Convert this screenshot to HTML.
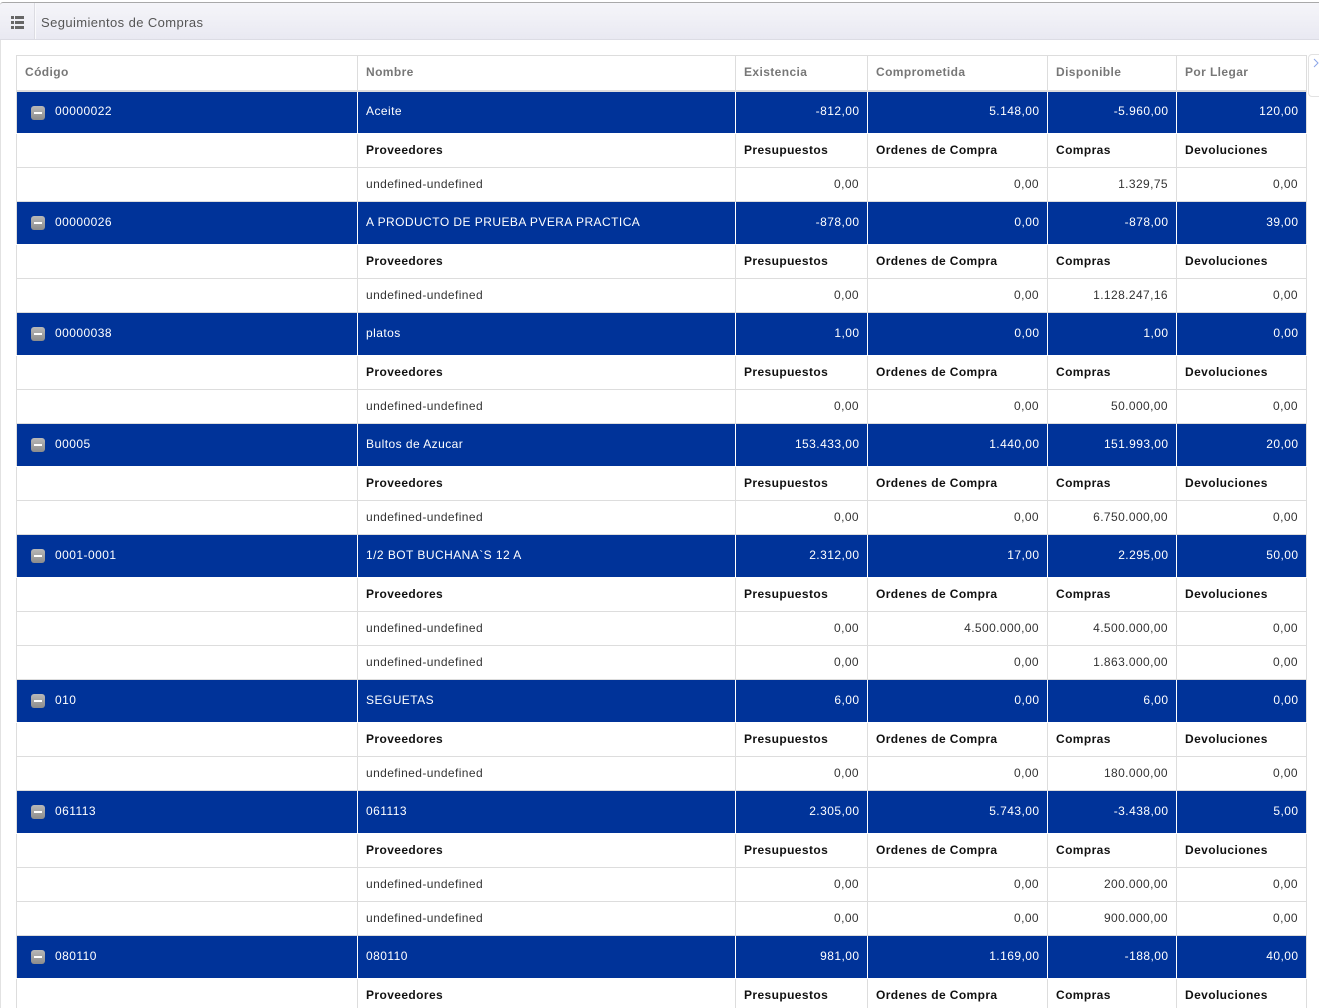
<!DOCTYPE html>
<html><head><meta charset="utf-8">
<style>
html,body{margin:0;padding:0;width:1319px;height:1008px;overflow:hidden;background:#fff;font-family:"Liberation Sans",sans-serif;}
#wrap{position:absolute;left:0;top:0;width:1319px;height:1008px;overflow:hidden;}
#top{position:absolute;left:0;top:2px;width:1319px;background:linear-gradient(#f5f5f9,#e9e9f2);border-top:1px solid #a9a9a9;border-bottom:1px solid #dcdce4;height:36px;border-top-left-radius:3px;}
#sep{position:absolute;left:34px;top:3px;width:1px;height:36px;background:#dcdce2;border-right:1px solid #fafafc;}
#ttl{position:absolute;left:41px;top:14px;font-size:13px;line-height:17px;letter-spacing:.4px;color:#555;white-space:nowrap;}
#ic{position:absolute;left:11px;top:16px;}
#lb{position:absolute;left:0;top:40px;width:1px;height:968px;background:#e2e2e2;}
#tab{position:absolute;left:1308px;top:54px;width:14px;height:43px;border:1px solid #e2e2e2;border-radius:4px 0 0 4px;box-sizing:border-box;background:#fff;}
table{position:absolute;left:16px;top:55px;border-collapse:collapse;table-layout:fixed;width:1290px;font-size:12px;letter-spacing:.4px;color:#333;}
td,th{border:1px solid #ddd;padding:0 8px;white-space:nowrap;overflow:hidden;box-sizing:border-box;font-weight:normal;text-align:left;}
th{height:35px;color:#777;font-weight:bold;border-bottom:2px solid #ddd;padding-bottom:2px;}
tr.b td{height:43px;background:#003399;color:#fff;border-color:#fff;letter-spacing:.45px;padding-bottom:3px;}
tr.b td.r{padding-right:7.5px;}
tr.b td:first-child{border-left-color:#ddd;padding-left:38px;position:relative;}
tr.b td:last-child{border-right-color:#ddd;}
tr.s td{height:34px;color:#111;font-weight:bold;padding-bottom:1px;}
tr.d td{height:34px;padding-bottom:1px;}
.r{text-align:right;}
i{position:absolute;left:14px;top:14px;width:14px;height:14px;border-radius:3px;background:linear-gradient(#b8b8b8,#8c8c8c);}
i:after{content:"";position:absolute;left:3px;top:6px;width:8px;height:2px;background:#fff;}
</style></head><body>
<div id="wrap">
<div id="top"></div><div id="sep"></div>
<svg id="ic" width="13" height="13" viewBox="0 0 13 13"><path fill="#666" d="M0 0h3v3H0zM4 0h9v3H4zM0 5h3v3H0zM4 5h9v3H4zM0 10h3v3H0zM4 10h9v3H4z"/></svg>
<div id="ttl">Seguimientos de Compras</div>
<div id="lb"></div>
<div id="tab"><svg width="8" height="12" style="position:absolute;left:4px;top:3px" viewBox="0 0 8 12"><path d="M1 1l4 4-4 4" fill="none" stroke="#8aa4e8" stroke-width="1"/></svg></div>
<table>
<colgroup><col style="width:341px"><col style="width:378px"><col style="width:132px"><col style="width:180px"><col style="width:129px"><col style="width:130px"></colgroup>
<tr><th>Código</th><th>Nombre</th><th>Existencia</th><th>Comprometida</th><th>Disponible</th><th>Por Llegar</th></tr>

<tr class="b"><td><i></i>00000022</td><td>Aceite</td><td class="r">-812,00</td><td class="r">5.148,00</td><td class="r">-5.960,00</td><td class="r">120,00</td></tr>
<tr class="s"><td></td><td>Proveedores</td><td>Presupuestos</td><td>Ordenes de Compra</td><td>Compras</td><td>Devoluciones</td></tr>
<tr class="d"><td></td><td>undefined-undefined</td><td class="r">0,00</td><td class="r">0,00</td><td class="r">1.329,75</td><td class="r">0,00</td></tr>

<tr class="b"><td><i></i>00000026</td><td>A PRODUCTO DE PRUEBA PVERA PRACTICA</td><td class="r">-878,00</td><td class="r">0,00</td><td class="r">-878,00</td><td class="r">39,00</td></tr>
<tr class="s"><td></td><td>Proveedores</td><td>Presupuestos</td><td>Ordenes de Compra</td><td>Compras</td><td>Devoluciones</td></tr>
<tr class="d"><td></td><td>undefined-undefined</td><td class="r">0,00</td><td class="r">0,00</td><td class="r">1.128.247,16</td><td class="r">0,00</td></tr>

<tr class="b"><td><i></i>00000038</td><td>platos</td><td class="r">1,00</td><td class="r">0,00</td><td class="r">1,00</td><td class="r">0,00</td></tr>
<tr class="s"><td></td><td>Proveedores</td><td>Presupuestos</td><td>Ordenes de Compra</td><td>Compras</td><td>Devoluciones</td></tr>
<tr class="d"><td></td><td>undefined-undefined</td><td class="r">0,00</td><td class="r">0,00</td><td class="r">50.000,00</td><td class="r">0,00</td></tr>

<tr class="b"><td><i></i>00005</td><td>Bultos de Azucar</td><td class="r">153.433,00</td><td class="r">1.440,00</td><td class="r">151.993,00</td><td class="r">20,00</td></tr>
<tr class="s"><td></td><td>Proveedores</td><td>Presupuestos</td><td>Ordenes de Compra</td><td>Compras</td><td>Devoluciones</td></tr>
<tr class="d"><td></td><td>undefined-undefined</td><td class="r">0,00</td><td class="r">0,00</td><td class="r">6.750.000,00</td><td class="r">0,00</td></tr>

<tr class="b"><td><i></i>0001-0001</td><td>1/2 BOT BUCHANA`S 12 A</td><td class="r">2.312,00</td><td class="r">17,00</td><td class="r">2.295,00</td><td class="r">50,00</td></tr>
<tr class="s"><td></td><td>Proveedores</td><td>Presupuestos</td><td>Ordenes de Compra</td><td>Compras</td><td>Devoluciones</td></tr>
<tr class="d"><td></td><td>undefined-undefined</td><td class="r">0,00</td><td class="r">4.500.000,00</td><td class="r">4.500.000,00</td><td class="r">0,00</td></tr>
<tr class="d"><td></td><td>undefined-undefined</td><td class="r">0,00</td><td class="r">0,00</td><td class="r">1.863.000,00</td><td class="r">0,00</td></tr>

<tr class="b"><td><i></i>010</td><td>SEGUETAS</td><td class="r">6,00</td><td class="r">0,00</td><td class="r">6,00</td><td class="r">0,00</td></tr>
<tr class="s"><td></td><td>Proveedores</td><td>Presupuestos</td><td>Ordenes de Compra</td><td>Compras</td><td>Devoluciones</td></tr>
<tr class="d"><td></td><td>undefined-undefined</td><td class="r">0,00</td><td class="r">0,00</td><td class="r">180.000,00</td><td class="r">0,00</td></tr>

<tr class="b"><td><i></i>061113</td><td>061113</td><td class="r">2.305,00</td><td class="r">5.743,00</td><td class="r">-3.438,00</td><td class="r">5,00</td></tr>
<tr class="s"><td></td><td>Proveedores</td><td>Presupuestos</td><td>Ordenes de Compra</td><td>Compras</td><td>Devoluciones</td></tr>
<tr class="d"><td></td><td>undefined-undefined</td><td class="r">0,00</td><td class="r">0,00</td><td class="r">200.000,00</td><td class="r">0,00</td></tr>
<tr class="d"><td></td><td>undefined-undefined</td><td class="r">0,00</td><td class="r">0,00</td><td class="r">900.000,00</td><td class="r">0,00</td></tr>

<tr class="b"><td><i></i>080110</td><td>080110</td><td class="r">981,00</td><td class="r">1.169,00</td><td class="r">-188,00</td><td class="r">40,00</td></tr>
<tr class="s"><td></td><td>Proveedores</td><td>Presupuestos</td><td>Ordenes de Compra</td><td>Compras</td><td>Devoluciones</td></tr>
</table>
</div>
</body></html>
